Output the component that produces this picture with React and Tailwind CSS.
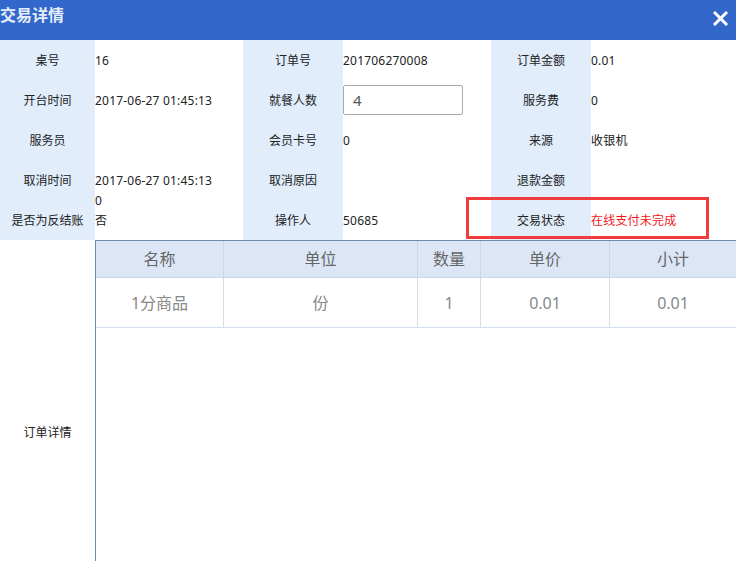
const INFO = [
  [
    { label: "桌号", value: "16" },
    { label: "订单号", value: "201706270008" },
    { label: "订单金额", value: "0.01" },
  ],
  [
    { label: "开台时间", value: "2017-06-27 01:45:13" },
    { label: "就餐人数", input: "4" },
    { label: "服务费", value: "0" },
  ],
  [
    { label: "服务员", value: "" },
    { label: "会员卡号", value: "0" },
    { label: "来源", value: "收银机" },
  ],
  [
    { label: "取消时间", value: "2017-06-27 01:45:13", extra: "0" },
    { label: "取消原因", value: "" },
    { label: "退款金额", value: "" },
  ],
  [
    { label: "是否为反结账", value: "否" },
    { label: "操作人", value: "50685" },
    { label: "交易状态", value: "在线支付未完成", red: true },
  ],
];

const LABEL_W = ["w-[95px]", "w-[100px]", "w-[100px]"];
const VALUE_W = ["w-[148px]", "w-[148px]", "w-[145px]"];

const COLS = [
  { title: "名称", w: "w-[128px]", value: "1分商品" },
  { title: "单位", w: "w-[194px]", value: "份" },
  { title: "数量", w: "w-[63px]", value: "1" },
  { title: "单价", w: "w-[129px]", value: "0.01" },
  { title: "小计", w: "flex-1", value: "0.01" },
];

function Cell({ item, i }) {
  return (
    <>
      <div className={`${LABEL_W[i]} h-[40px] shrink-0 bg-[#E1EDFB] flex items-center justify-center pt-[1px]`}>
        {item.label}
      </div>
      <div className={`${VALUE_W[i]} h-[40px] shrink-0 flex`}>
        {item.input ? (
          <div className="self-center w-[120px] h-[30px] border border-[#A9A9A9] rounded-[2px] flex items-center pl-[9px] text-[15px] text-[#555]">
            {item.input}
          </div>
        ) : item.extra ? (
          <div className="pt-[11px] leading-[20px] tracking-[0.2px]">
            <div>{item.value}</div>
            <div>{item.extra}</div>
          </div>
        ) : (
          <div className={`self-center pt-[1px] tracking-[0.2px] ${item.red ? "text-[#F31818]" : ""}`}>{item.value}</div>
        )}
      </div>
    </>
  );
}

export default function App() {
  return (
    <div
      className="w-[736px] h-[561px] overflow-hidden bg-white text-[12px] text-[#222]"
      style={{ fontFamily: "'Noto Sans', 'Noto Sans CJK SC', sans-serif" }}
    >
      <div className="h-[40px] bg-[#3367CC] flex items-start justify-between">
        <span className="pt-[4px] text-[16px] font-bold text-[#E4EDF9] leading-[22px]">交易详情</span>
        <svg className="mt-[11px] mr-[8px]" width="15" height="15" viewBox="0 0 15 15">
          <path d="M2 2 L13 13 M13 2 L2 13" stroke="#fff" strokeWidth="3" strokeLinecap="square" />
        </svg>
      </div>

      <div className="relative">
        {INFO.map((row, r) => (
          <div key={r} className="flex">
            {row.map((item, i) => (
              <Cell key={i} item={item} i={i} />
            ))}
          </div>
        ))}
        <div className="absolute left-[466px] top-[157px] w-[243px] h-[42px] border-[3px] border-[#F03C3C]" />
      </div>

      <div className="flex h-[386px]">
        <div className="w-[95px] shrink-0 flex items-center justify-center">订单详情</div>
        <div className="flex-1 border-l border-t border-[#6F8BB0]">
          <div className="flex h-[37px] bg-[#DCE6F6] border-b border-[#C9D8EC] text-[16px] text-[#666]">
            {COLS.map((c, i) => (
              <div
                key={i}
                className={`${c.w} shrink-0 flex items-center justify-center ${i < COLS.length - 1 ? "border-r border-[#C9D8EC]" : ""}`}
              >
                {c.title}
              </div>
            ))}
          </div>
          <div className="flex h-[50px] border-b border-[#D3DEEC] text-[16px] text-[#888]">
            {COLS.map((c, i) => (
              <div
                key={i}
                className={`${c.w} shrink-0 flex items-center justify-center ${i < COLS.length - 1 ? "border-r border-[#D3DEEC]" : ""}`}
              >
                {c.value}
              </div>
            ))}
          </div>
        </div>
      </div>
    </div>
  );
}
